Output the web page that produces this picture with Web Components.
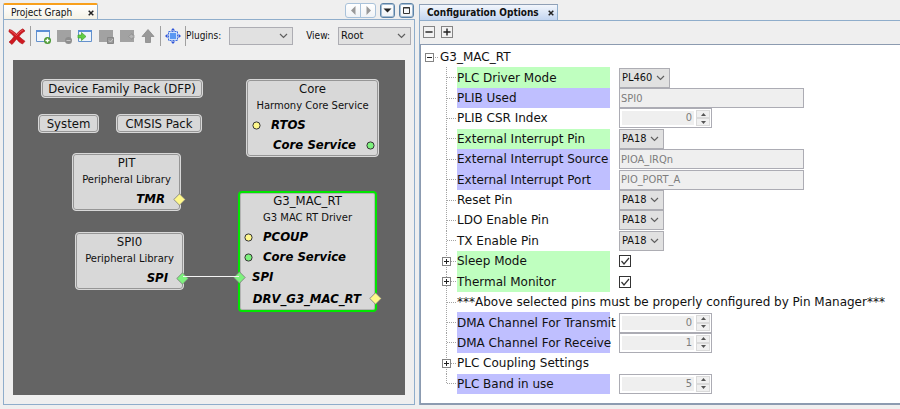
<!DOCTYPE html>
<html lang="en">
<head>
<meta charset="utf-8">
<title>Project Graph</title>
<style>
html, body { margin: 0; height: 100%; }
body { background: #efefef; color: #111; font: 10px/14px "DejaVu Sans Condensed", "DejaVu Sans", sans-serif; overflow: hidden; }
</style>
</head>
<body>
<harmony-workspace></harmony-workspace>
<script>
const define = (name, html, setup) => {
  const template = document.createElement('template');
  template.innerHTML = html;
  customElements.define(name, class extends HTMLElement {
    constructor() {
      super();
      this.attachShadow({ mode: 'open' }).append(template.content.cloneNode(true));
    }
    connectedCallback() {
      if (setup && !this.ready) { this.ready = true; setup(this, this.shadowRoot); }
    }
  });
};

const chevron = '<svg viewBox="0 0 9 6" width="9" height="6" aria-hidden="true"><path d="M1 1l3.500 3.500L8 1" fill="none" stroke="#5f5f5f" stroke-width="1.200"/></svg>';

const selectCss = `
  .select { display: grid; align-items: center; }
  .select > * { grid-area: 1 / 1; }
  .select svg { justify-self: end; margin-right: 5px; pointer-events: none; }
  select { appearance: none; box-sizing: border-box; width: 100%; height: 100%; margin: 0; border: 1px solid #adadb3; border-radius: 0; background: #e1e1e1; color: #111; font: 11px/16px "DejaVu Sans Condensed", sans-serif; padding: 0 16px 0 2px; }
`;

/* Tab with a title and a close button */
define('dock-tab', `
<style>
  :host { display: flex; align-items: center; box-sizing: border-box; height: 16px; padding-left: 7px; border: 1px solid #8fadcb; border-width: 0 1px 0 1px; }
  :host([tone="active"]) { height: 17px; border-top: 2px solid #f8a01c; border-radius: 2px 2px 0 0; background: linear-gradient(#fff, #f4f1e4); }
  :host([tone="focus"]) { border-top: 1px solid #8f9fb5; background: linear-gradient(#f2f6fc, #c3d5f0); font-weight: bold; }
  button { border: 0; background: none; padding: 0; margin: 0; font: inherit; color: inherit; }
  .close { display: flex; padding: 4px 3px 3px; margin-left: auto; }
</style>
<button class="title" role="tab"><slot></slot></button>
<button class="close" aria-label="Close"><svg width="6" height="6" viewBox="0 0 6 6"><path d="M.7.7l4.600 4.600M5.300.7L.7 5.300" stroke="#222" stroke-width="1.500"/></svg></button>
`);

/* Scroll, list and maximize buttons at the end of the tab strip */
define('strip-controls', `
<style>
  :host { display: flex; gap: 4px; height: 15px; padding-right: 1px; }
  .pair { display: flex; }
  button { box-sizing: border-box; width: 15px; height: 15px; display: grid; place-items: center; padding: 0; border: 1px solid #a9c2da; border-radius: 3px; background: linear-gradient(#fff, #f0f3f6); }
  .pair button { width: 16px; }
  .pair button:first-child { border-radius: 3px 0 0 3px; }
  .pair button:last-child { border-radius: 0 3px 3px 0; margin-left: -1px; }
  .dark { border-color: #5c82a6; box-shadow: inset 0 0 0 1px #a5bdd4; }
</style>
<div class="pair">
  <button aria-label="Scroll left"><svg width="9" height="9"><path d="M6.500 0v9L2 4.500z" fill="#999"/></svg></button>
  <button aria-label="Scroll right"><svg width="9" height="9"><path d="M2.500 0v9L7 4.500z" fill="#999"/></svg></button>
</div>
<button class="dark" aria-label="Tab list"><svg width="9" height="9"><path d="M.5 2.500h8L4.500 6.500z" fill="#222"/></svg></button>
<button class="dark" aria-label="Maximize"><svg width="9" height="9"><path d="M1.500 1.500h6v6h-6z M1 2h7" fill="none" stroke="#333"/></svg></button>
`);

const icons = {
  remove: '<path d="M1.500 1.500C5 2.500 6 4 8.500 6 10.500 4 13 1.500 15 .8L17 3C14.500 4.500 12.500 6.500 11 8.300c2 2 4 3.500 6 5L14.500 16C12 15 10 13 8.500 11 7 13 5.500 15 4 16.500L1 14c2-1.500 3.500-3.500 5-5.500C4 6.500 2.500 5 .8 3.500z" fill="#cf1820" stroke="#a91218" stroke-width=".6"/><path d="M2 2.500c3 1.500 4.500 3.500 6.500 5 2-2 4-4.500 6.500-5.500" fill="none" stroke="#e8585c"/>',
  add: '<path d="M1.500 2.500h13v11h-13z" fill="#f0f6fc" stroke="#6491cc"/><path d="M1 2h14v2H1z" fill="#5b8fd6"/><circle cx="12.500" cy="12.500" r="3.500" fill="#4c9a35"/><path d="M12.500 10.500v4M10.500 12.500h4" stroke="#fff" stroke-width="1.300"/>',
  minus: '<path d="M1 2h14v12H1z" fill="#a2a2a2"/><circle cx="12.500" cy="12.500" r="3.500" fill="#8e8e8e"/><path d="M10.500 12.500h4" stroke="#c4c4c4"/>',
  open: '<path d="M1.500 2.500h13v11h-13z" fill="#edf4fc" stroke="#6491cc"/><path d="M1 2h14v2H1z" fill="#5b8fd6"/><path d="M1 7h3.500V4.500L9 8.500l-4.500 4V10H1z" fill="#5fce45" stroke="#3fa22c" stroke-width=".7"/>',
  check: '<path d="M1 2h14v12H1z" fill="#a2a2a2"/><path d="M9.500 9.500h6v6h-6z" fill="#999" stroke="#868686"/><path d="M11 12.500l1.500 1.500L15 11" fill="none" stroke="#ccc"/>',
  back: '<path d="M1 2h14v12H1z" fill="#a2a2a2"/><path d="M15 7h-2V5.500L9.500 8.500l3.500 3V10h2z" fill="#b4b4b4" stroke="#8e8e8e" stroke-width=".7"/>',
  up: '<path d="M8 1.500L14 8.500h-3.500v6h-5v-6H2z" fill="#999" stroke="#898989" stroke-width=".8"/>',
  fit: '<path d="M3.500 3.500h9v9h-9z" fill="#cfe0fb" stroke="#3c6ce0" stroke-dasharray="2 1"/><path d="M5 5h6v6H5z" fill="#5b98f2"/><path d="M8 0l2.200 2.500H5.800zM8 16l2.200-2.500H5.800zM0 8l2.500-2.200v4.400zM16 8l-2.500-2.200v4.400z" fill="#2f55d8"/>'
};

/* Toolbar icon button; its drawing is picked by the "icon" attribute */
define('tool-button', `
<style>
  :host { display: flex; width: 16px; height: 16px; }
  :host([icon="remove"]) { width: 18px; height: 17px; }
  button { flex: 1; display: flex; border: 0; padding: 0; background: none; }
  svg { width: 100%; height: 100%; overflow: visible; }
</style>
<button><svg aria-hidden="true"></svg></button>
`, (host, root) => {
  const icon = host.getAttribute('icon');
  root.querySelector('svg').setAttribute('viewBox', icon === 'remove' ? '0 0 18 17' : '0 0 16 16');
  root.querySelector('svg').innerHTML = icons[icon];
  root.querySelector('button').setAttribute('aria-label', icon);
});

/* Labelled drop-down of the toolbar */
define('tool-select', `
<style>
  :host { display: flex; align-items: center; gap: 8px; }
  .select { width: var(--field-width); height: 18px; }
  label { font-size: 10px; }
  ${selectCss}
</style>
<label for="field"><slot></slot></label>
<div class="select"><select id="field"><option></option></select>${chevron}</div>
`, (host, root) => { root.querySelector('option').textContent = host.getAttribute('value') || ''; });

/* Port row of a graph node: shape is "circle" or "diamond", side is left or right */
define('node-port', `
<style>
  :host { display: flex; align-items: center; gap: 10px; height: 20px; padding: 0 4px; font: italic bold 13px/20px "DejaVu Sans Condensed", sans-serif; color: #000; }
  :host([side="right"]) { flex-direction: row-reverse; padding: 0 2px; }
  :host([shape="diamond"]) { gap: 6px; padding: 0; }
  :host([shape="diamond"][side="right"]) { gap: 8px; }
  svg { flex: none; overflow: visible; }
  :host([shape="diamond"][side="left"]) svg { margin-left: -7px; }
  :host([shape="diamond"][side="right"]) svg { margin-right: -7px; }
</style>
<svg aria-hidden="true"></svg><span><slot></slot></span>
`, (host, root) => {
  const fill = host.getAttribute('tone') === 'green' ? '#7df27d' : '#fff88c';
  const diamond = host.getAttribute('shape') === 'diamond';
  const svg = root.querySelector('svg');
  const size = diamond ? 13 : 9;
  svg.setAttribute('width', size);
  svg.setAttribute('height', size);
  svg.innerHTML = diamond
    ? `<path d="M6.500.8L12.200 6.500 6.500 12.200.8 6.500z" fill="${fill}" stroke="#777" stroke-width=".8"/>`
    : `<circle cx="4.500" cy="4.500" r="3.600" fill="${fill}" stroke="#333"/>`;
});

/* Box on the graph canvas */
define('graph-node', `
<style>
  :host { position: absolute; box-sizing: border-box; border: 1px solid #d8d8d8; border-radius: 4px; background: #d8d8d8; padding: 1px; text-align: center; white-space: nowrap; box-shadow: inset 0 0 0 1px #969696; }
  :host([selected]) { border-color: #00e600; border-width: 2px; padding: 0; box-shadow: inset 0 0 0 1px #b4b4b4; }
  .title { font-size: 13px; line-height: 16px; }
  .note { font: 10px/18px "DejaVu Sans", sans-serif; display: none; }
  :host([note]) .note { display: block; }
  :host(:not([note])) .title { line-height: 15px; }
</style>
<div class="title"></div><div class="note"></div><slot></slot>
`, (host, root) => {
  root.querySelector('.title').textContent = host.getAttribute('name');
  root.querySelector('.note').textContent = host.getAttribute('note') || '';
});

define('project-graph', `
<style>
  :host { display: block; position: relative; background: #646464; overflow: hidden; }
  .link { position: absolute; left: 170px; top: 216px; width: 56px; height: 1px; background: #f4f4f4; }
</style>
<graph-node name="Device Family Pack (DFP)" style="left:28px;top:19px;width:162px"></graph-node>
<graph-node name="System" style="left:25px;top:54px;width:61px"></graph-node>
<graph-node name="CMSIS Pack" style="left:103px;top:54px;width:86px"></graph-node>
<graph-node name="Core" note="Harmony Core Service" style="left:233px;top:19px;width:133px">
  <node-port side="left" shape="circle">RTOS</node-port>
  <node-port side="right" shape="circle" tone="green">Core Service</node-port>
</graph-node>
<graph-node name="PIT" note="Peripheral Library" style="left:59px;top:93px;width:109px">
  <node-port side="right" shape="diamond">TMR</node-port>
</graph-node>
<graph-node name="SPI0" note="Peripheral Library" style="left:62px;top:172px;width:109px">
  <node-port side="right" shape="diamond" tone="green">SPI</node-port>
</graph-node>
<graph-node name="G3_MAC_RT" note="G3 MAC RT Driver" selected style="left:225px;top:131px;width:139px">
  <node-port side="left" shape="circle">PCOUP</node-port>
  <node-port side="left" shape="circle" tone="green">Core Service</node-port>
  <node-port side="left" shape="diamond" tone="green">SPI</node-port>
  <node-port side="right" shape="diamond" style="height:23px">DRV_G3_MAC_RT</node-port>
</graph-node>
<div class="link"></div>
`);

/* Expand or collapse box; "open" shows a minus */
define('tree-toggle', `
<style>
  :host { display: flex; width: 9px; height: 9px; }
  :host([large]) { width: 12px; height: 12px; }
  button { flex: 1; display: grid; place-items: center; padding: 0; border: 1px solid #848484; border-radius: 0; background: #fff; }
  :host([large]) button { background: #f2f2f2; }
</style>
<button><svg width="100%" height="100%" viewBox="0 0 7 7"><path stroke="#222" fill="none"/></svg></button>
`, (host, root) => {
  const open = host.hasAttribute('open');
  root.querySelector('path').setAttribute('d', open ? 'M1 3.500h5' : 'M1 3.500h5M3.500 1v5');
  root.querySelector('button').setAttribute('aria-label', open ? 'Collapse' : 'Expand');
});

/* One option of the configuration tree: connector lines, label and control */
define('config-row', `
<style>
  :host { display: grid; grid-template-columns: 36px 153px 1fr; min-height: 0; font: 12px/20px "DejaVu Sans", sans-serif; white-space: nowrap; }
  .gutter { display: grid; align-items: center; padding-left: 21px;
    background: repeating-linear-gradient(#a4a4a4 0 1px, transparent 1px 2px) 25px 0 / 1px 100% no-repeat,
      repeating-linear-gradient(90deg, #a4a4a4 0 1px, transparent 1px 2px) 26px 50% / 9px 1px no-repeat; }
  :host([last]) .gutter { background-size: 1px 50%, 9px 1px; }
  label, .text { align-self: stretch; display: flex; align-items: center; }
  :host([tone="green"]) label { background: #bfffbf; }
  :host([tone="blue"]) label { background: #bfbfff; }
  .text { grid-column: 2 / 4; }
  .control { margin-left: 9px; display: flex; align-items: center; }
  .select { height: 20px; }
  ${selectCss}
  input[type="text"], .spin { box-sizing: border-box; height: 20px; border: 1px solid #acacb4; border-radius: 0; }
  input { margin: 0; font: 11px/16px "DejaVu Sans Condensed", sans-serif; color: #7d7d7d; }
  input[type="text"] { width: 185px; padding: 0 1px; background: #efefef; }
  .spin { display: flex; width: 93px; padding: 1px; background: #fff; gap: 1px; }
  .spin input { appearance: textfield; flex: 1; min-width: 0; box-sizing: border-box; border: 1px solid #fff; background: #efefef; padding: 0 2px; text-align: right; }
  .spin input::-webkit-inner-spin-button { display: none; }
  .steps { display: grid; grid-template-rows: 1fr 1fr; width: 14px; }
  .steps button { display: grid; place-items: center; padding: 0; border: 1px solid #dadada; border-radius: 0; background: #f0f0f0; min-height: 0; }
  input[type="checkbox"] { appearance: none; box-sizing: border-box; width: 12px; height: 12px; border: 1px solid #333; background: #fff; grid-area: 1 / 1; }
  .tick { display: grid; }
  .tick svg { grid-area: 1 / 1; pointer-events: none; }
</style>
<div class="gutter"></div>
`, (host, root) => {
  const get = name => host.getAttribute(name) || '';
  const value = get('value');
  const kind = get('kind');
  const controls = {
    select: `<div class="select"><select id="field"><option>${value}</option></select>${chevron}</div>`,
    text: `<input id="field" type="text" value="${value}" disabled>`,
    spin: `<div class="spin"><input id="field" type="number" value="${value}" disabled><div class="steps">
      <button aria-label="Increase"><svg width="5" height="3"><path d="M0 3h5L2.500 0z" fill="#555"/></svg></button>
      <button aria-label="Decrease"><svg width="5" height="3"><path d="M0 0h5L2.500 3z" fill="#555"/></svg></button></div></div>`,
    check: `<div class="tick"><input id="field" type="checkbox" checked><svg width="12" height="12"><path d="M2.500 6l2.500 3 5-6" fill="none" stroke="#333" stroke-width="1.200"/></svg></div>`
  };
  if (host.hasAttribute('expandable')) root.querySelector('.gutter').innerHTML = '<tree-toggle></tree-toggle>';
  root.querySelector('.gutter').insertAdjacentHTML('afterend', controls[kind]
    ? `<label for="field">${get('label')}</label><div class="control">${controls[kind]}</div>`
    : `<span class="text">${get('label')}</span>`);
});

define('config-tree', `
<style>
  :host { display: grid; grid-auto-rows: minmax(0, 1fr); padding: 2px 0 9px; background: #fff; border: 1px solid #8c9bb0; border-width: 1px 0 2px 1px; overflow: hidden; }
  .root { display: flex; align-items: center; gap: 1px; padding-left: 4px; font: 12px/20px "DejaVu Sans", sans-serif; }
  .dots { width: 4px; height: 1px; background: repeating-linear-gradient(90deg, #a4a4a4 0 1px, transparent 1px 2px); }
</style>
<div class="root"><tree-toggle open></tree-toggle><span class="dots"></span>G3_MAC_RT</div>
<config-row label="PLC Driver Mode" kind="select" value="PL460" tone="green"></config-row>
<config-row label="PLIB Used" kind="text" value="SPI0" tone="blue"></config-row>
<config-row label="PLIB CSR Index" kind="spin" value="0"></config-row>
<config-row label="External Interrupt Pin" kind="select" value="PA18" tone="green"></config-row>
<config-row label="External Interrupt Source" kind="text" value="PIOA_IRQn" tone="blue"></config-row>
<config-row label="External Interrupt Port" kind="text" value="PIO_PORT_A" tone="blue"></config-row>
<config-row label="Reset Pin" kind="select" value="PA18"></config-row>
<config-row label="LDO Enable Pin" kind="select" value="PA18"></config-row>
<config-row label="TX Enable Pin" kind="select" value="PA18"></config-row>
<config-row label="Sleep Mode" kind="check" tone="green" expandable></config-row>
<config-row label="Thermal Monitor" kind="check" tone="green" expandable></config-row>
<config-row label="***Above selected pins must be properly configured by Pin Manager***"></config-row>
<config-row label="DMA Channel For Transmit" kind="spin" value="0" tone="blue"></config-row>
<config-row label="DMA Channel For Receive" kind="spin" value="1" tone="blue"></config-row>
<config-row label="PLC Coupling Settings" expandable></config-row>
<config-row label="PLC Band in use" kind="spin" value="5" tone="blue" last></config-row>
`);

define('graph-panel', `
<style>
  :host { display: flex; flex-direction: column; padding: 3px 0 4px 3px; min-width: 0; }
  .strip { display: flex; justify-content: space-between; height: 16px; }
  dock-tab { width: 95px; }
  .body { flex: 1; display: flex; flex-direction: column; border: 1px solid #8fadcb; min-height: 0; }
  .bar { display: flex; align-items: center; gap: 4px; height: 32px; padding: 0 3px 0 4px; }
  .rule { width: 1px; height: 20px; background: #a0a0a0; }
  .tools { display: flex; gap: 5px; }
  .last { margin-left: auto; --field-width: 73px; }
  .first { --field-width: 64px; margin-left: -4px; }
  project-graph { flex: 1; margin: 8px 9px 9px; }
</style>
<div class="strip"><dock-tab tone="active">Project Graph</dock-tab><strip-controls></strip-controls></div>
<div class="body">
  <div class="bar" role="toolbar">
    <tool-button icon="remove"></tool-button>
    <span class="rule"></span>
    <div class="tools">
      <tool-button icon="add"></tool-button><tool-button icon="minus"></tool-button>
      <tool-button icon="open"></tool-button><tool-button icon="check"></tool-button>
      <tool-button icon="back"></tool-button><tool-button icon="up"></tool-button>
    </div>
    <span class="rule"></span>
    <tool-button icon="fit"></tool-button>
    <span class="rule"></span>
    <tool-select class="first">Plugins:</tool-select>
    <tool-select class="last" value="Root">View:</tool-select>
  </div>
  <project-graph></project-graph>
</div>
`);

define('config-panel', `
<style>
  :host { display: flex; flex-direction: column; padding: 4px 0 4px; min-width: 0; }
  dock-tab { width: 139px; }
  .body { flex: 1; display: flex; flex-direction: column; border: 1px solid #8fadcb; border-width: 1px 0 0 1px; min-height: 0; }
  .bar { display: flex; align-items: center; gap: 6px; height: 21px; padding: 0 3px 2px; }
  config-tree { flex: 1; min-height: 0; }
</style>
<dock-tab tone="focus">Configuration Options</dock-tab>
<div class="body">
  <div class="bar"><tree-toggle open large></tree-toggle><tree-toggle large></tree-toggle></div>
  <config-tree></config-tree>
</div>
`);

define('harmony-workspace', `
<style>
  :host { display: grid; grid-template-columns: minmax(0, 415fr) minmax(0, 481fr); gap: 4px; height: 100vh; }
</style>
<graph-panel></graph-panel><config-panel></config-panel>
`);
</script>
</body>
</html>
